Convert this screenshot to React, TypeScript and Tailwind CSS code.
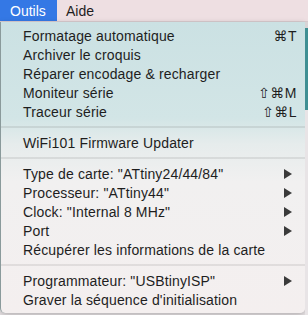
import React from "react";

type Row =
  | { kind: "item"; label: string; shortcut?: string; sub?: boolean }
  | { kind: "sep" };

const rows: Row[] = [
  { kind: "item", label: "Formatage automatique", shortcut: "⌘T" },
  { kind: "item", label: "Archiver le croquis" },
  { kind: "item", label: "Réparer encodage & recharger" },
  { kind: "item", label: "Moniteur série", shortcut: "⇧⌘M" },
  { kind: "item", label: "Traceur série", shortcut: "⇧⌘L" },
  { kind: "sep" },
  { kind: "item", label: "WiFi101 Firmware Updater" },
  { kind: "sep" },
  { kind: "item", label: 'Type de carte: "ATtiny24/44/84"', sub: true },
  { kind: "item", label: 'Processeur: "ATtiny44"', sub: true },
  { kind: "item", label: 'Clock: "Internal 8 MHz"', sub: true },
  { kind: "item", label: "Port", sub: true },
  { kind: "item", label: "Récupérer les informations de la carte" },
  { kind: "sep" },
  { kind: "item", label: 'Programmateur: "USBtinyISP"', sub: true },
  { kind: "item", label: "Graver la séquence d'initialisation" },
];

const SubArrow = () => (
  <svg width="8" height="10" viewBox="0 0 8 10" className="mr-[5px]">
    <polygon points="0,0 8,5 0,10" fill="#3a3a3a" />
  </svg>
);

const MenuRow = ({ row }: { row: Row }) => {
  if (row.kind === "sep") {
    return (
      <div className="h-[12px] flex items-center">
        <div className="h-[2px] w-full bg-black/[0.08]" />
      </div>
    );
  }
  return (
    <div className="h-[19px] flex items-center justify-between pl-[22px] pr-[8px] text-[#1e1e1e]">
      <span className="whitespace-nowrap tracking-[0.15px]">{row.label}</span>
      {row.shortcut && (
        <span className="whitespace-nowrap tracking-[0.5px]">{row.shortcut}</span>
      )}
      {row.sub && <SubArrow />}
    </div>
  );
};

export default function App() {
  return (
    <div
      className="w-[308px] h-[315px] overflow-hidden flex flex-col bg-[#ebe6e8] text-[14px] leading-none"
      style={{ fontFamily: '"Liberation Sans", "DejaVu Sans", Arial, sans-serif' }}
    >
      {/* menu bar */}
      <div className="h-[22px] flex items-stretch bg-[#eedfe2] border-b border-[#d9cdd0]">
        <div className="w-[57px] flex items-center pl-[10px] bg-[#3478e5] text-white">
          Outils
        </div>
        <div className="flex items-center pl-[9px] text-[#1e1e1e]">Aide</div>
      </div>

      <div className="flex flex-1 min-h-0">
        {/* dropdown */}
        <div className="w-[305px] h-[291px] pt-[4px] pb-[4px] rounded-b-[5px] border-l border-[#8a9a9b] shadow-[0_2px_6px_rgba(0,0,0,0.25)] bg-[linear-gradient(to_bottom,#cbe1e3_0%,#d2e5e6_33%,#e6ecec_42%,#f1f0f0_55%,#f4efef_100%)]">
          {rows.map((r, i) => (
            <MenuRow key={i} row={r} />
          ))}
        </div>
        {/* window behind */}
        <div className="flex-1 flex flex-col">
          <div className="h-[6px] bg-[#d8d4d6]" />
          <div className="h-[82px] bg-[#3f8f93]" />
          <div className="flex-1 bg-[#e8e4e6]" />
        </div>
      </div>
    </div>
  );
}
